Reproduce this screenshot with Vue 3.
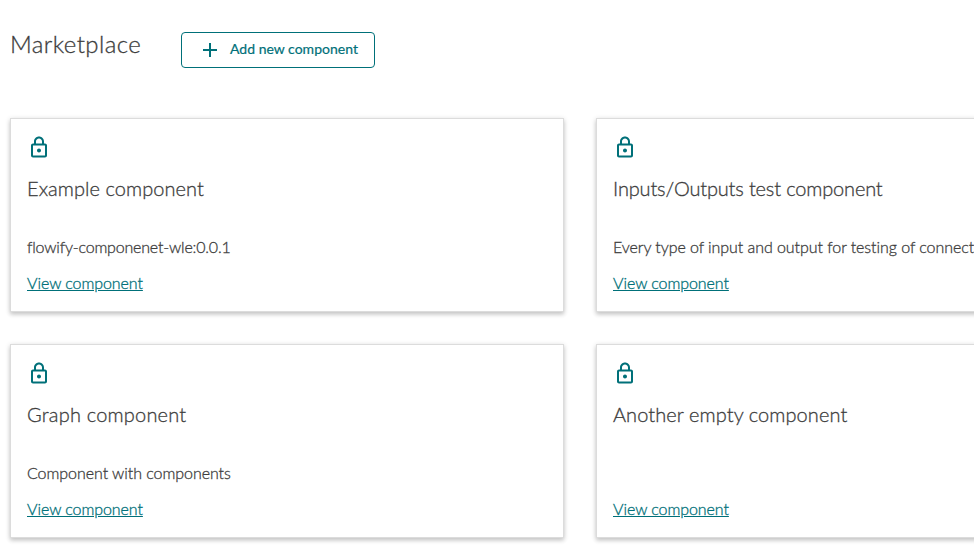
<script setup>
const cards = [
  { title: 'Example component', text: 'flowify-componenet-wle:0.0.1', titleSpace: 0.06, textSpace: -0.19 },
  { title: 'Inputs/Outputs test component', text: 'Every type of input and output for testing of connect', titleSpace: -0.16, textSpace: -0.06 },
  { title: 'Graph component', text: 'Component with components', titleSpace: 0.2, textSpace: -0.05 },
  { title: 'Another empty component', text: '', titleSpace: 0.08, textSpace: 0 },
]
</script>

<template>
  <main class="page">
    <header class="header">
      <h1 class="heading">Marketplace</h1>
      <button class="add" type="button">
        <svg class="plus" viewBox="0 0 24 24"><path d="M19 13h-6v6h-2v-6H5v-2h6V5h2v6h6v2z" /></svg>
        <span class="add-label">Add new component</span>
      </button>
    </header>
    <section class="grid">
      <article v-for="card in cards" :key="card.title" class="card">
        <svg class="lock" viewBox="0 0 24 24">
          <path fill-rule="evenodd" d="M18 8.5h-1v-2c0-2.76-2.24-5-5-5s-5 2.24-5 5v2H6c-1.1 0-2 .9-2 2v10c0 1.1.9 2 2 2h12c1.1 0 2-.9 2-2v-10c0-1.1-.9-2-2-2zm-9-2c0-1.66 1.34-3 3-3s3 1.34 3 3v2H9v-2zm-3 14h12v-10H6v10zm8-5c0 1.1-.9 2-2 2s-2-.9-2-2 .9-2 2-2 2 .9 2 2z" />
        </svg>
        <h2 class="title"><span :style="{ letterSpacing: card.titleSpace + 'px' }">{{ card.title }}</span></h2>
        <p class="text"><span :style="{ letterSpacing: card.textSpace + 'px' }">{{ card.text }}</span></p>
        <a class="link">View component</a>
      </article>
    </section>
  </main>
</template>

<style>
body { background: #fff; overflow: hidden; }
</style>

<style scoped>
.page {
  box-sizing: border-box;
  height: 547px;
  padding: 32px 0 0 10px;
  overflow: hidden;
  font-family: Lato, "Liberation Sans", sans-serif;
  font-weight: 300;
  color: #3d3d3d;
  -webkit-text-stroke-width: 0.3px;
}
.header { display: flex; align-items: flex-start; gap: 40px; height: 86px; }
.heading { margin: -2px 0 0; width: 131px; font-size: 24px; line-height: 28px; font-weight: 300; letter-spacing: 0.42px; white-space: nowrap; }
.add {
  box-sizing: border-box;
  display: flex;
  align-items: center;
  gap: 8px;
  width: 194px;
  height: 36px;
  padding: 0 16px;
  border: 1px solid #007079;
  border-radius: 4px;
  background: #fff;
  color: #007079;
  font: 400 14px/20px Lato, sans-serif;
  letter-spacing: 0.01px;
  -webkit-text-stroke-width: 0.2px;
  white-space: nowrap;
}
.add-label { padding-bottom: 2px; }
.plus, .lock { width: 24px; height: 24px; fill: #007079; flex: none; }
.grid { display: grid; grid-template-columns: 554px 554px; grid-auto-rows: 194px; gap: 32px; }
.card {
  box-sizing: border-box;
  display: flex;
  flex-direction: column;
  align-items: flex-start;
  padding: 16px;
  border: 1px solid #dcdcdc;
  box-shadow: 0 1px 5px rgba(0, 0, 0, 0.16), 0 3px 4px rgba(0, 0, 0, 0.12);
  background: #fff;
}
.title { margin: 17px 0 0; height: 25px; font-size: 20px; line-height: 24px; font-weight: 300; white-space: nowrap; }
.text { margin: 36px 0 0; height: 20px; font-size: 16px; line-height: 20px; white-space: nowrap; }
.link { margin-top: 16px; font-size: 16px; line-height: 20px; letter-spacing: -0.07px; color: #007079; text-decoration: underline; white-space: nowrap; }
</style>
